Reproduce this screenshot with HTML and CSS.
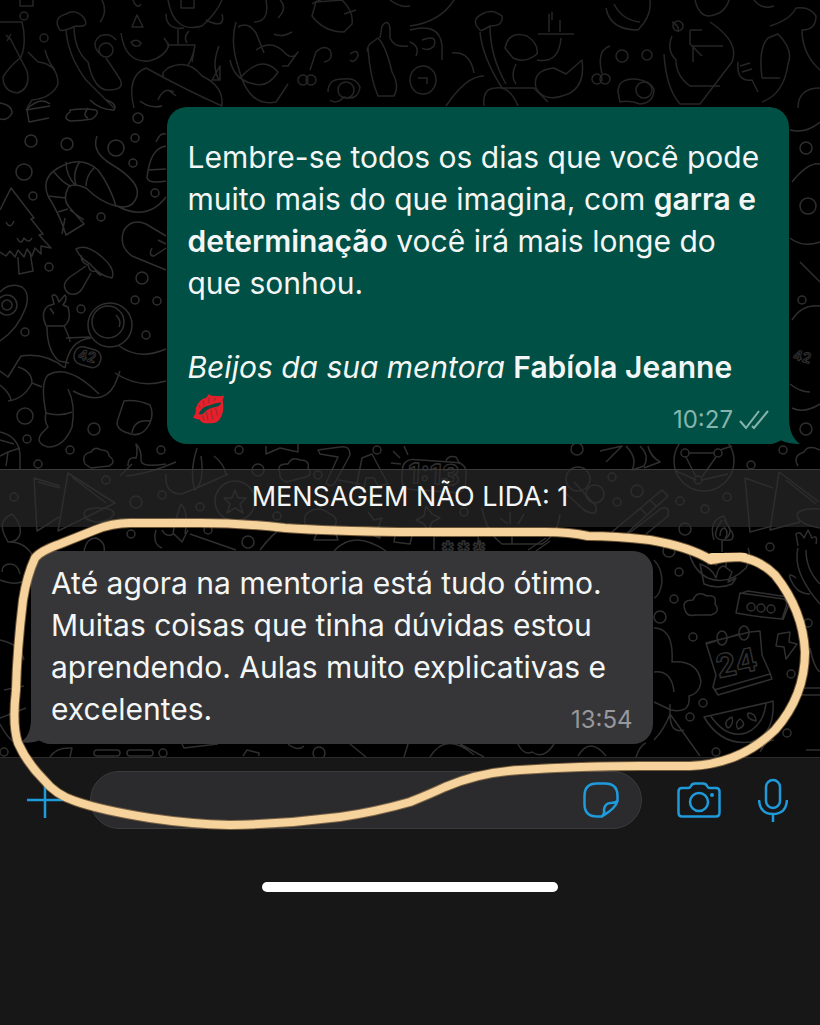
FILE: index.html
```html
<!DOCTYPE html>
<html lang="pt-BR">
<head>
  <meta charset="UTF-8" />
  <meta name="viewport" content="width=device-width, initial-scale=1.0" />
  <title>Conversa</title>
  <link rel="stylesheet" href="styles.css">
</head>
<body>
  <main class="chat">
    <svg class="doodles" viewBox="0 0 820 757" preserveAspectRatio="xMidYMin slice" aria-hidden="true">
      <!-- top -->
      <g class="faint">
        <path d="M20 0v6h13V0M0 22q8 0 22 0q5 20-1 35q-12 10-18 20q0 14 14 16q14-4 10-22L10 38M6 35l5 5M11 34l-4 7M28 52l10 10q20 2 20 22q-6 14-26 16l-5 8M45 50q3 12 10 20M100 22q8-10 2-22M133 0q4 10 8 4"/>
        <path d="M60 30q-8-12 6-16q10-6 18 4q6 10-8 8q-14 6-16 4M66 30q2 26 20 50l28 28M74 26q0 24 14 36q6 28 20 28q20 0 10-14l-12-18M100 54q-10-10 0-18q10-4 16 4M137 15l-5 12h11z"/>
        <path d="M121 33q4 30 28 28q16-4 20-16l-5-7M131 42q6-4 10 1q-2 5-8 2zM168 0q6 34 34 26q14-12 20-26M166 14q0 16 18 14M181 0v8h13V0M206 20q20 10 16-6M178 29v16h16M189 31q-6 6-2 12M195 45q-2 12-7 20M167 45h28l-3 17"/>
        <path d="M134 108q-8-32 12-40q40 22 76 38q2-20-20-30q-14-18-34-8q-8 6-4 8M158 100q6-14 16-8M168 90l8 6M212 80l8-14v14zM219 46q-8 20 0 34"/>
        <path d="M236 22q-6 20 2 44q10 42 38 36l12-18M238 27q10-6 18 6l8 20M230 60q4 20 24 24q14 4 24-12q-14-16-32 0l-6 6M256 50q14-10 26 0q10 12 16 2l-10 14h-6M274 34q8 4 18-2M254 22q16 0 12-22M280 0q8 8-2 18"/>
        <path d="M312 4q12-8 22-4M342 0q12 12 10 24l-8 8q-20 0-32-16l4-14zM344 14l12-4M310 70l6-18q8-8 14-2q4 10-6 12M298 80a5 5 0 1 0 10 0a5 5 0 1 0-10 0M306 80a5 5 0 1 0 10 0a5 5 0 1 0-10 0M350 54q8-6 8 2q-4 8-8 4"/>
        <path d="M328 92q0-14 16-13q12-2 16 8q-2 14-16 10q-8 8-14 3M368 48q2 30 10 48h16q6-10-2-24q-6-26-14-34l-8 6q-4 4-2 8zM380 38l2-12q6-8 8 2v10q4 10 18 8M390 0q10 8 20 6"/>
        <path d="M410 26q30-4 44-26M410 30q30-8 32 16v14M410 42q10 4 6 14M422 40q16-6 12 6q-6 6-12 2M452 53q18-2 22 20M446 106q20-30 38-30M410 80a13 14 0 1 0 26 0a13 14 0 1 0-26 0M418 78h9v6"/>
        <path d="M480 30q-10-10 2-16q10-6 20 2q2 10-12 10q-10 6-10 4M480 32q2 24 22 56h32l14 14M490 26q0 30 16 58M505 48q4-18 22-12q12 8 10 18q-12 10-24 4zM516 64q-6 12 0 20M537 60q22 4 24-22M549 14v18M560 20v12M538 34h36M552 12v8"/>
        <path d="M536 88q-4-18 18-20l12 6l16-14q4 30-20 36q-18 6-26-8M484 106q-2-18 12-18q14-2 22 18M606 8q4 22 32 22q14-14 12-30M614 4q8 16 26 18M610 46q-14 4-8 28M592 79a5 5 0 1 0 10 0a5 5 0 1 0-10 0M600 79a5 5 0 1 0 10 0a5 5 0 1 0-10 0"/>
        <path d="M618 92q0-14 18-13q14 2 18 10q0 14-14 15q-10-4-20-2zM664 54q2 34 16 50h20l32-42q8-20-22-40M672 36q-6 14 4 24q0 16 14 26h30M690 30h12M690 30v14l12 12M693 62v-16h30M695 0q4 16 14 16q16-2 20-16M672 22q8 4 6 10"/>
        <path d="M762 78q-4-30 6-40l10-4q16 16 10 30q-4 30-26 38M762 78h18M770 26q20-6 26-18q14-2 20 8q0 14-14 14q0 24 18 40M754 0q8 10 20 6M738 62q-2 20 14 18l6 12M740 66l10-3M742 72l10-3M798 108q0-20 22-20"/>
        <circle cx="24" cy="16" r="4"/><circle cx="44" cy="38" r="4"/><circle cx="106" cy="50" r="7"/><circle cx="346" cy="90" r="8"/><circle cx="622" cy="56" r="6"/><circle cx="647" cy="55" r="5"/><circle cx="644" cy="90" r="8"/><circle cx="678" cy="26" r="5"/>
      </g>

      <!-- left column -->
      <path d="M0 103q12 2 12 10q-4 8-12 6M26 110l24-4M27 110l2 12l20-4M26 110q14-14 24-6M70 112q-8 6 0 9q10 0 22-2q8-6 4-9q-12-2-26 0zM88 108q-6 8 0 10M90 100q10 10 24 10q4-6-8-10M140 101q10 8 22 5"/>
      <path d="M48 196q-8-20 14-30q20-10 36 4q12 16 18 36q-16-4-30-18q-14-6-18 0q-6 12 2 20l14 16l-18 11q-6-20-18-39zM54 172q8 10 16 14M66 162q0 14 10 24M80 161q-8 12-4 24M94 168q-8 8-8 18M48 196l18 2M58 212l10-3M62 234l3-16M70 210l14 10M97 136q-6 16 14 28q30 18 26 32q-4 14-20 10q30 16 49-9"/>
      <path d="M0 210l11-22l23 30l-3 1l12 15l-4 1l12 13l-10-2v8l-6-6l-3 8l-5-7l-3 8l-6-7l-3 7l-5-6l-4 5l-6-4M18 257l1 17l14-3l-3-19M6 222q4 8 8-1M17 238q4 8 7 0q5 6 8 0"/>
      <path d="M166 146q-16 2-19 32q2 6 19 3M148 170l18-1M156 142q4-10 10-8M166 236l-20-12q-14-6-22 6q-6 16 8 26l34 14M152 248q-4 8 2 8l12-8M158 240l8 4"/>
      <path d="M76 249q10-6 26 8q14 12 10 21q-12-2-22-14q-10-6-14-15zM81 255q0 8 7 10q2 8 8 6q4 6 7 3M86 266l-16 11q-10 8-2 16q8 4 14-4l9-16"/>
      <path d="M0 292q10-10 22-5q8 6 4 20q-8 22-26 34"/><circle cx="7" cy="305" r="10"/><circle cx="7" cy="305" r="5"/>
      <path d="M46 326q-6-14 2-20l6-2l-2-8q4-4 7 6l6-7q3 4-2 10l5 2q4 14-4 19zM50 308l4 6M47 327q0 24 12 34l10 2M64 326q6 12 6 16M65 368q4-28 26-30M66 338l24-1M65 368q-20-16-44-12L8 377l-8-6M18 367q14 4 14 16l10 4M32 383q-8 16-24 18M0 385q10 8 11 15"/>
      <circle cx="110" cy="325" r="22"/><circle cx="108" cy="322" r="16"/>
      <path d="M116 315q6 6 3 12M118 345q20 16 48 4M115 373q24 16 51 8M73 391q34 18 44-12l3-8M46 413q-6-30 2-38q20-12 51 19M68 389q8 16 4 38q-8 20-24 20q-14-4-6-14l6-6q-4-6-2-14q14 4 26-1"/>
      <rect x="74" y="348" width="27" height="18" rx="8" transform="rotate(16 87 357)"/>
      <text x="78" y="361" class="label-sm" transform="rotate(14 87 357)">42</text>
      <path d="M124 401q12-2 26 4q4 8 0 18q-8 16-22 10q-14-4-10-14zM132 433q2-14 18-12M85 464q-4-10 6-12q4-6 10-2q8 0 8 6q8 6 0 10l-18 2zM128 466q0-10 8-8q2-6 0-14q6 6 5 16q0 8 25 4"/>
      <path d="M0 432q18 4 20 22v16M0 440l14 4M8 452l12-4M0 456l8-4l-2 14"/>
      <g>
        <circle cx="31" cy="141" r="6"/><circle cx="67" cy="144" r="6"/><circle cx="116" cy="148" r="8"/><circle cx="138" cy="118" r="5"/><circle cx="135" cy="138" r="4"/><circle cx="133" cy="163" r="4"/><circle cx="24" cy="172" r="8"/><circle cx="33" cy="196" r="4"/><circle cx="155" cy="193" r="4"/><circle cx="101" cy="217" r="4"/><circle cx="49" cy="267" r="4"/><circle cx="142" cy="278" r="6"/><circle cx="135" cy="300" r="4"/><circle cx="157" cy="301" r="4"/><circle cx="81" cy="309" r="4"/><circle cx="25" cy="332" r="4"/><circle cx="146" cy="335" r="4"/><circle cx="25" cy="416" r="8"/><circle cx="94" cy="429" r="6"/><circle cx="27" cy="439" r="4"/><circle cx="70" cy="450" r="4"/><circle cx="161" cy="450" r="4"/><circle cx="38" cy="464" r="4"/>
      </g>

      <!-- right edge -->
      <path d="M790 130q16 4 30-8M792 182q16-20 28-18M790 238q12 10 30 4M800 262l20 20M792 320q10-16 28-14M790 384q10 8 20 8M792 408q12 6 28-4"/>
      <text x="793" y="361" class="label-sm" transform="rotate(14 800 357)">42</text>
      <circle cx="806" cy="148" r="6"/><circle cx="808" cy="206" r="8"/><circle cx="802" cy="300" r="4"/><circle cx="806" cy="429" r="6"/><circle cx="783" cy="450" r="4"/><circle cx="751" cy="465" r="4"/>

      <!-- around the unread line -->
      <path d="M34 478l26 8M34 478l3 53l22-14M38 482l22 6M68 473l47 30l-57 28zM72 477l34 26M84 514q0-6 14-6q16 0 16 6q-4 8-18 8q-12-2-12-8z"/>
      <path d="M126 476q22-2 50-14M166 474q-2 20 16 20q20-8 46-20M197 448q-8 26-2 42q10-8 6-34M214 456q10 8 12 18M120 476l12-12M173 534q2-14 8-30q8 8 4 30"/>
      <circle cx="235" cy="501" r="20"/><path d="M235 490l3 8h8l-6 6l3 9l-8-5l-8 5l3-9l-6-6h8z"/>
      <path d="M266 446v8l14-6l18 4v-8M318 450l22-3q10-2 10 8l-14 26q-4 8-10 2l12-26l-18-3zM338 480l22 4M362 458l10-4l16 30l-10 2l-4-8h-8l-2 10h-8zM280 473q-4-10 8-9q4-8 12-4q10 0 8 8q6 8-6 10l-16 4q-8-4-6-9zM393 451l7 7M404 446l4 9M391 463l10 1"/>
      <rect x="402" y="461" width="64" height="30" rx="10" transform="rotate(4 434 476)"/><path d="M446 461q2-6 10-4l4 7"/>
      <text x="408" y="484" class="label-lg" transform="rotate(3 434 476)">1:13</text>
      <path d="M306 514q12-10 24 0q10 4 4 14l4 12h-24l4-10q-18-2-12-16zM368 512l6 8l8-2l-4 10l2 10l-10-4M426 506l6 8l8 4l-8 4l-4 10l-4-8l-8-4l8-4zM482 508q4 24 20 36h40q16-10 18-30M510 512v12M500 518l8 6M524 514l-6 10M502 532h22M512 528v16M560 488l24 22q14 8 12-4l-22-24"/>
      <circle cx="578" cy="479" r="12"/><circle cx="595" cy="494" r="9"/><path d="M612 532l50-42l6 6l-42 38M628 534l34-26q8-2 6 8l-22 18M640 508l6 6M650 500l6 6M600 451l22-5l-16 16M626 446q12 12 6 24l12-4q6-10-4-20M648 446q2 10 12 16l-16 6"/>
      <circle cx="704" cy="461" r="30"/><circle cx="685" cy="453" r="4"/><circle cx="718" cy="453" r="4"/><circle cx="698" cy="480" r="4"/><path d="M689 453h25M686 457l10 20M716 457l-14 20M720 450l12-4M674 470l22 10M702 480l26-6"/>
      <path d="M745 478l28 10M745 478l5 54l22-6M779 472l40 30M779 472l-9 58l30-8M786 480l30 24M797 514q4-6 23-5M797 514q0 10 23 14M714 540q-6-20 10-24q4 12 8 16q4 10-8 8M720 536q0-8 5-8q4 6 0 10M798 466q-6-10 6-14q4-8 16-2"/>
      <g>
        <circle cx="14" cy="497" r="4"/><circle cx="106" cy="480" r="4"/><circle cx="136" cy="502" r="6"/><circle cx="162" cy="495" r="4"/><circle cx="200" cy="507" r="4"/><circle cx="258" cy="470" r="6"/><circle cx="239" cy="450" r="4"/><circle cx="277" cy="516" r="4"/><circle cx="318" cy="475" r="4"/><circle cx="377" cy="450" r="4"/><circle cx="464" cy="512" r="4"/><circle cx="612" cy="477" r="4"/><circle cx="617" cy="502" r="4"/><circle cx="637" cy="491" r="6"/><circle cx="680" cy="501" r="4"/><circle cx="705" cy="509" r="4"/><circle cx="727" cy="497" r="4"/><circle cx="685" cy="529" r="6"/><circle cx="577" cy="449" r="6"/>
      </g>

      <!-- around the incoming message -->
      <path d="M4 534q-6-14 8-20q10 10 8 20q-2 8-12 8zM10 542q16 0 24 16M0 580q20 8 30-4M2 572q0-8 8-8q8 0 10 10M84 552q2-14 12-14q10 4 8 14M156 530q-4 14 6 18M162 530q4 8 12 4l8 8l6-12M190 534l46 16M0 640q20 4 24 20M4 690l20-4M0 718l26-10M0 724q10 20 24 22"/>
      <path d="M260 550q12-16 22-22M334 551q20-22 52 0M396 530l-2 12l16 2l3-12M434 550v-14h44l2 14M528 550l18-12M536 551l14-10"/>
      <text x="440" y="562" class="label-lg">***</text>
      <path d="M688 548q4 22 20 30q20 8 38-10q6-12 2-20M700 564q12 4 16 14q2-12 8-12l8 6l-4 10l8-4l-4 6q-14 6-28 0zM708 565v-9l8 9l10-12v14M722 520q-14 20 2 20q12-8 0-20M722 540v12"/>
      <path d="M685 610q-4-10 8-10q4-10 14-4q10-2 8 8q6 8-4 11h-16q-8 2-10-5z"/>
      <path d="M740 593l44 6q4 2 2 8l-4 12q-24-2-46-6zM742 593l6-2l40 6l2 6M786 600l3 4l-6 16"/><circle cx="751" cy="607" r="4"/><circle cx="761" cy="608" r="4"/><circle cx="771" cy="609" r="4"/>
      <path d="M706 644l10-3M727 638l12-4M750 632l10-1l2 24l8 18l2 6l-54 16l-5-8l3-12l-10-32zM714 690l56-16"/><ellipse cx="722" cy="638" rx="5" ry="7"/><ellipse cx="744" cy="633" rx="5" ry="7"/>
      <text x="716" y="674" class="label-md" transform="rotate(-12 737 664)">24</text>
      <path d="M778 634l12-2l-1 10l8 2l-11 15l-2-12l-8-1zM704 717l66-15l3-1q2 34-22 41q-30 4-47-25zM710 715q16 24 36 18q18-8 20-30"/>
      <path d="M728 728q-6-6 4-11q2 8-4 11zM738 729q-4-6 2-10q8 6-2 10zM756 721q-10-2-8-8q8 0 8 8z"/>
      <path d="M654 560q8 8 8 22q-2 14-8 16M654 628q20 0 18 34q26-2 29 20q-2 12-12 14q2 18-18 14l-17-8M654 672q18-2 20 20M670 704v10M670 714l30 42M654 740q10-10 16-26q0 20 14 16M798 546l-2-12q4-4 8 4l4-8l4 8q6-4 4 6M798 548q-6 24 22 56M806 550q0 20 14 34M796 578q-8-6-6 0q6 16 20 16M810 648q4 20 10 24M800 695h20M804 688h16M760 752q6-12 14-12M806 750h14"/>
      <path d="M50 757q6-10 22-9l-2 9M182 744l2 4l34-4M243 756l4-6l12 3v3M288 744q10 8 16 2M350 744l16 13M408 744l-4 13M430 757q16-26 44-2M460 744l24 13M518 744q6 12 14 8q12 8 22-8M578 756q12-20 28 0M636 757q4-12 10-14"/>
      <rect x="94" y="750" width="26" height="6" rx="3"/><rect x="127" y="750" width="26" height="6" rx="3"/>
      <g>
        <circle cx="131" cy="534" r="4"/><circle cx="208" cy="530" r="4"/><circle cx="248" cy="542" r="6"/><circle cx="669" cy="551" r="6"/><circle cx="770" cy="547" r="4"/><circle cx="679" cy="572" r="4"/><circle cx="674" cy="599" r="4"/><circle cx="660" cy="617" r="6"/><circle cx="693" cy="637" r="4"/><circle cx="703" cy="703" r="4"/><circle cx="690" cy="717" r="4"/><circle cx="716" cy="752" r="4"/><circle cx="791" cy="674" r="4"/><circle cx="787" cy="733" r="4"/><circle cx="808" cy="623" r="4"/><circle cx="163" cy="753" r="4"/><circle cx="319" cy="753" r="6"/><circle cx="4" cy="752" r="4"/>
      </g>
    </svg>

    <div class="row out">
      <article class="bubble">
        <p>Lembre-se todos os dias que você pode<br>
          muito mais do que imagina, com <strong>garra e<br>
          determinação</strong> você irá mais longe do<br>
          que sonhou.</p>
        <p><em>Beijos da sua mentora</em> <strong>Fabíola Jeanne</strong></p>
        <div class="last-line">
          <svg class="kiss" viewBox="0 0 36 36" role="img" aria-label="beijo">
            <path fill="#e3202b" d="M2 27q4-4 3-10q4-10 11-11l3-4q3 3 5 2q5 1 11 0q-2 4-1 8q1 10-3 16q-4 6-12 5q-7 1-10-4q-3 0-7-2z"/>
            <path fill="#004f43" d="M8 23q4-8 12-9q6-3 12-3q-1 4-6 5q-8 1-12 6q-3 3-6 1z"/>
            <path fill="none" stroke="#8e2a2c" stroke-width="1" d="M10 17l-2-3M14 14l-1-5M19 12V6M24 10l2-4M12 25l2 5M16 21l2 9M21 19l2 10M26 17l2 8"/>
          </svg>
          <span class="meta">
            <time>10:27</time>
            <svg class="ticks" viewBox="0 0 30 20" aria-label="lida"><path d="M1 11l6 7L20 1M13 16l2 2L29 1"/></svg>
          </span>
        </div>
        <svg class="tail" viewBox="0 0 30 26" aria-hidden="true"><path d="M0 0h19q0 18 11 26q-12 0-20-4q-4 3-10 4z"/></svg>
      </article>
    </div>

    <div class="unread">MENSAGEM NÃO LIDA: 1</div>

    <div class="row in">
      <article class="bubble">
        <p>Até agora na mentoria está tudo ótimo.<br>
          Muitas coisas que tinha dúvidas estou<br>
          aprendendo. Aulas muito explicativas e</p>
        <div class="last-line">
          <span>excelentes.</span>
          <time class="meta">13:54</time>
        </div>
        <svg class="tail" viewBox="0 0 30 26" aria-hidden="true"><path d="M30 0H10q0 18-10 24q10 2 20-2q4 3 10 4z"/></svg>
      </article>
    </div>
  </main>

  <footer class="footer">
    <form class="composer">
      <button type="button" class="icon add" aria-label="Anexar">
        <svg viewBox="0 0 38 38"><path d="M1 19h36M19 1v36"/></svg>
      </button>
      <div class="field">
        <input type="text" aria-label="Mensagem">
        <button type="button" class="icon sticker" aria-label="Figurinhas">
          <svg viewBox="0 0 36 36"><path d="M19 34.500h-5Q1.500 34.500 1.500 22v-8Q1.500 1.500 14 1.500h8Q34.500 1.500 34.500 14v5Q33 26 19 34.500zM19 34.500q3-3 2-7Q22 21 28 21q4 0 6.500-2"/></svg>
        </button>
      </div>
      <button type="button" class="icon camera" aria-label="Câmera">
        <svg viewBox="0 0 44 36"><path d="M5 6h6q2 0 3-2q1-2.500 4-2.500h8q3 0 4 2.500q1 2 3 2h6q3.500 0 3.500 3.500v21q0 4-3.500 4H5q-3.500 0-3.500-4v-21Q1.500 6 5 6z"/><circle cx="22" cy="20" r="9"/><circle class="dot" cx="35" cy="13" r="2"/></svg>
      </button>
      <button type="button" class="icon mic" aria-label="Gravar áudio">
        <svg viewBox="0 0 30 44"><rect x="8" y="2" width="14" height="28" rx="7"/><path d="M1 22q1 14 14 14t14-14M15 36v8"/></svg>
      </button>
    </form>
    <div class="home-bar"></div>
  </footer>

  <!-- hand-drawn loop around the reply -->
  <svg class="marker" viewBox="0 0 820 1025" aria-hidden="true">
    <path class="edge" d="M711 560Q690 547 650 540Q615 536 588 536Q570 532 545 532H400Q330 531 285 528Q240 523 200 523H130Q112 523 95 530L60 544Q40 551 35 558Q27 575 23 600Q17 650 16 690Q12 725 18 743Q27 763 44 780Q56 795 75 801Q100 810 150 818Q190 824 230 825Q285 824 340 817Q375 812 410 802Q430 794 445 787Q480 772 520 770Q580 766 640 766H690Q740 764 775 730Q805 696 805 652Q803 610 775 575Q760 560 740 557Q725 557 711 560"/>
    <path d="M711 560Q690 547 650 540Q615 536 588 536Q570 532 545 532H400Q330 531 285 528Q240 523 200 523H130Q112 523 95 530L60 544Q40 551 35 558Q27 575 23 600Q17 650 16 690Q12 725 18 743Q27 763 44 780Q56 795 75 801Q100 810 150 818Q190 824 230 825Q285 824 340 817Q375 812 410 802Q430 794 445 787Q480 772 520 770Q580 766 640 766H690Q740 764 775 730Q805 696 805 652Q803 610 775 575Q760 560 740 557Q725 557 711 560M712 557h32"/>
  </svg>
</body>
</html>
```

FILE: styles.css
```css
* {
  box-sizing: border-box;
}
body {
  position: relative;
  display: flex;
  flex-direction: column;
  min-height: 100vh;
  margin: 0;
  background: #171717;
  color: #f4f6f6;
  font-family: Inter, "Liberation Sans", sans-serif;
  font-size: 30px;
  line-height: 42px;
}
p {
  margin: 0;
}
strong {
  font-weight: 600;
}

/* chat */
.chat {
  position: relative;
  overflow: hidden;
  padding: 107px 0 13px;
  background: #000;
}
.doodles {
  position: absolute;
  top: 0;
  left: 0;
  width: 100%;
  height: 100%;
  fill: none;
  stroke: #2f2f30;
  stroke-width: 1.5;
  stroke-linejoin: round;
}
.doodles .faint {
  stroke: #262627;
}
.label-sm {
  font-size: 14px;
  font-weight: 600;
  stroke-width: 1;
}
.label-md {
  font-size: 32px;
  font-weight: 700;
}
.label-lg {
  font-size: 28px;
  font-weight: 700;
}
.row {
  position: relative;
  display: flex;
  padding: 0 31px;
}
.row.out {
  justify-content: flex-end;
}
.bubble {
  position: relative;
  width: 82%;
  padding: 11px 20px 14px;
  border-radius: 20px;
  background: #363638;
}
.out .bubble {
  padding-top: 29px;
  background: #005045;
}
.out p + p {
  margin-top: 42px;
}
.last-line {
  display: flex;
  justify-content: space-between;
  align-items: center;
  height: 42px;
}
.kiss {
  width: 36px;
  height: 34px;
  margin-left: 3px;
}
.meta {
  display: flex;
  align-items: center;
  gap: 6px;
  padding-top: 22px;
  color: #98989c;
  font-size: 24px;
  line-height: 20px;
}
.out .meta {
  color: #86b5ad;
}
.ticks {
  width: 30px;
  height: 20px;
  fill: none;
  stroke: #86b5ad;
  stroke-width: 2;
}
.tail {
  position: absolute;
  bottom: 0;
  width: 30px;
  height: 26px;
}
.out .tail {
  right: -11px;
  fill: #005045;
}
.in .tail {
  left: -10px;
  fill: #363638;
}
.unread {
  position: relative;
  margin: 25px 0 24px;
  padding: 6px 0 9px;
  border-top: 1px solid #3a3a3b;
  background: rgba(44, 44, 46, 0.66);
  font-size: 27px;
  text-align: center;
}

/* composer */
.footer {
  flex: 1;
  border-top: 1px solid #2c2c2d;
  background: #171717;
}
.composer {
  display: flex;
  align-items: center;
  padding: 13px 32px 0 26px;
}
.field {
  flex: 1;
  display: flex;
  align-items: center;
  min-width: 0;
  height: 58px;
  margin: 0 35px 0 26px;
  padding: 0 22px;
  border: 1px solid #3a3a3c;
  border-radius: 29px;
  background: #2b2b2d;
}
.field input {
  flex: 1;
  min-width: 0;
  border: none;
  outline: none;
  background: transparent;
  color: #f4f6f6;
  font: inherit;
}
.icon {
  padding: 0;
  border: none;
  background: none;
  cursor: pointer;
}
.icon svg {
  display: block;
  width: 100%;
  fill: none;
  stroke: #1f9bdc;
  stroke-width: 2.5;
  stroke-linejoin: round;
}
.icon .dot {
  fill: #1f9bdc;
  stroke: none;
}
.add {
  width: 38px;
}
.sticker {
  width: 36px;
}
.camera {
  width: 44px;
}
.mic {
  width: 30px;
  margin-left: 37px;
}
.home-bar {
  width: 36%;
  height: 10px;
  margin: 53px auto 0;
  border-radius: 5px;
  background: #fff;
}

/* marker line */
.marker {
  position: absolute;
  top: 0;
  left: 0;
  width: 100%;
  pointer-events: none;
  fill: none;
  stroke: #f6d39c;
  stroke-width: 8;
  stroke-linecap: round;
  stroke-linejoin: round;
}
.marker .edge {
  stroke: #b08a58;
  stroke-opacity: 0.6;
  stroke-width: 10;
}
```
